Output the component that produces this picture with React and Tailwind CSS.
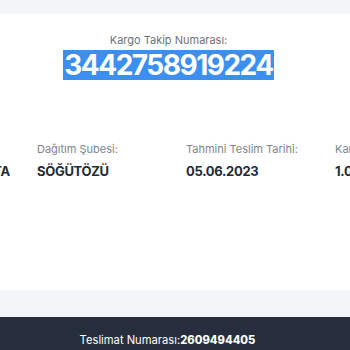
const Info = ({ label, value, right }) => (
  <div className="w-[149px] shrink-0 flex flex-col gap-[5px]">
    <span className="text-[11px] leading-[16px] text-[#80858c] whitespace-nowrap">{label}</span>
    <span
      className={`text-[13px] leading-[18px] font-bold tracking-[-0.3px] text-[#232b35] whitespace-nowrap ${right ? 'self-end pr-[27px]' : ''}`}
    >
      {value}
    </span>
  </div>
);

export default function App() {
  return (
    <div className="w-[350px] h-[350px] overflow-hidden bg-[#f3f6f9] font-['Inter','Noto_Sans',sans-serif]">
      <div className="h-[14px]" />
      <div className="h-[276px] bg-white flex flex-col">
        <div className="flex flex-col items-center pt-[19px] pr-[13px]">
          <span className="text-[11px] leading-[15px] text-[#6e737a]">Kargo Takip Numarası:</span>
          <span className="mt-[2px] px-[1px] bg-[#3b8ff0] text-white text-[28px] leading-[30px] font-bold tracking-[-1.5px]">
            3442758919224
          </span>
        </div>
        <div className="mt-[61px] flex -ml-[112px]">
          <Info label="Alıcı:" value="ANKARA KOLTA" right />
          <Info label="Dağıtım Şubesi:" value="SÖĞÜTÖZÜ" />
          <Info label="Tahmini Teslim Tarihi:" value="05.06.2023" />
          <Info label="Kargo Ağırlığı:" value="1.00 KG" />
        </div>
      </div>
      <div className="h-[27px]" />
      <div className="h-[40px] bg-[#262e3d] flex justify-center pt-[15px] pr-[15px]">
        <span className="text-[11.2px] leading-[16px] text-white">
          Teslimat Numarası:<span className="font-extrabold">2609494405</span>
        </span>
      </div>
    </div>
  );
}
